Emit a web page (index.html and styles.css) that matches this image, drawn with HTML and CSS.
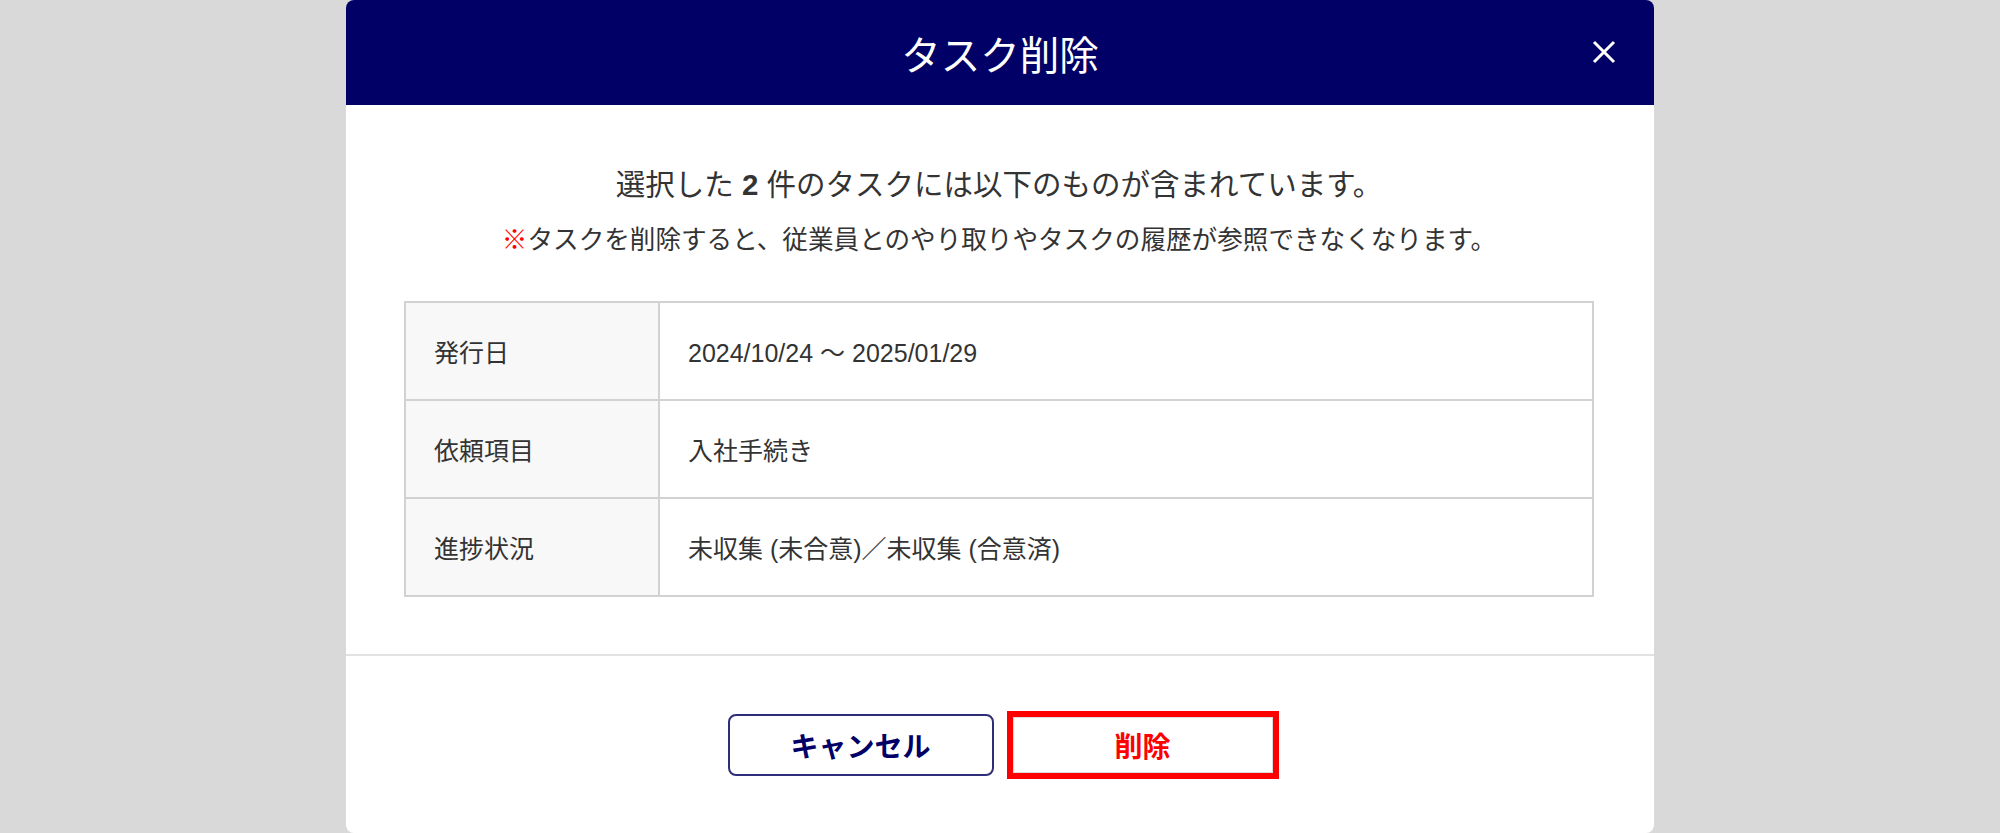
FILE: index.html
```html
<!DOCTYPE html>
<html lang="ja">
<head>
    <meta charset="UTF-8">
    <meta name="viewport" content="width=device-width, initial-scale=1.0">
    <title>タスク削除</title>
    <link rel="stylesheet" href="styles.css">
</head>
<body>
    <div class="modal">
        <header class="modal-header">
            <h1>タスク削除</h1>
            <button class="close-btn" type="button" aria-label="閉じる">
                <svg width="24" height="24" viewBox="0 0 24 24">
                    <path d="M2 2 L22 22 M22 2 L2 22" stroke="#fff" stroke-width="3" fill="none"/>
                </svg>
            </button>
        </header>

        <!-- Summary of tasks to delete -->
        <section class="modal-body">
            <p class="lead">選択した <strong>2</strong> 件のタスクには以下のものが含まれています。</p>
            <p class="note"><span class="mark">※</span>タスクを削除すると、従業員とのやり取りやタスクの履歴が参照できなくなります。</p>

            <table class="summary">
                <tr>
                    <th>発行日</th>
                    <td>2024/10/24 ～ 2025/01/29</td>
                </tr>
                <tr>
                    <th>依頼項目</th>
                    <td>入社手続き</td>
                </tr>
                <tr>
                    <th>進捗状況</th>
                    <td>未収集 (未合意)／未収集 (合意済)</td>
                </tr>
            </table>
        </section>

        <footer class="modal-footer">
            <button class="btn btn-cancel" type="button">キャンセル</button>
            <button class="btn btn-delete" type="button">削除</button>
        </footer>
    </div>
</body>
</html>
```

FILE: styles.css
```css
* {
    margin: 0;
    padding: 0;
    box-sizing: border-box;
}

body {
    font-family: "Liberation Sans", "Noto Sans CJK JP", sans-serif;
    background-color: #d9d9d9;
    color: #333;
    height: 833px;
    overflow: hidden;
}

.modal {
    width: 1308px;
    height: 833px;
    margin: 0 auto;
    background-color: #fff;
    border-radius: 8px;
    overflow: hidden;
    display: flex;
    flex-direction: column;
}

.modal-header {
    position: relative;
    height: 105px;
    background-color: #000066;
    display: flex;
    align-items: center;
    justify-content: center;
}

.modal-header h1 {
    font-size: 39.5px;
    font-weight: normal;
    color: #fff;
}

.close-btn {
    position: absolute;
    right: 38px;
    top: 40px;
    width: 24px;
    height: 24px;
    background: none;
    border: none;
    cursor: pointer;
}

.close-btn svg {
    display: block;
}

.modal-body {
    padding: 58px 60px 57px 58px;
    border-bottom: 2px solid #e2e2e2;
    text-align: center;
}

.lead {
    font-size: 29.5px;
    line-height: 44px;
}

.lead strong {
    font-weight: bold;
}

.note {
    margin-top: 14px;
    font-size: 25.6px;
    line-height: 38px;
}

.note .mark {
    color: #ff0000;
    font-weight: bold;
}

.summary {
    width: 100%;
    margin-top: 42px;
    border-collapse: collapse;
    text-align: left;
    font-size: 25px;
}

.summary th,
.summary td {
    height: 98px;
    padding: 0 28px;
    border: 2px solid #d2d2d2;
    font-weight: normal;
}

.summary th {
    width: 254px;
    background-color: #f8f8f8;
}

.modal-footer {
    flex: 1;
    display: flex;
    align-items: center;
    justify-content: center;
    gap: 13px;
    padding-left: 6px;
}

.btn {
    font-family: "Liberation Sans", "Noto Sans CJK JP", sans-serif;
    font-size: 28px;
    font-weight: bold;
    background-color: #fff;
    cursor: pointer;
}

.btn-cancel {
    width: 266px;
    height: 62px;
    color: #000066;
    border: 2px solid #2e2e78;
    border-radius: 8px;
}

.btn-delete {
    width: 272px;
    height: 68px;
    color: #ff0000;
    border: 6px solid #ff0000;
    box-shadow: inset 0 0 0 1px #dcdcdc;
}
```
